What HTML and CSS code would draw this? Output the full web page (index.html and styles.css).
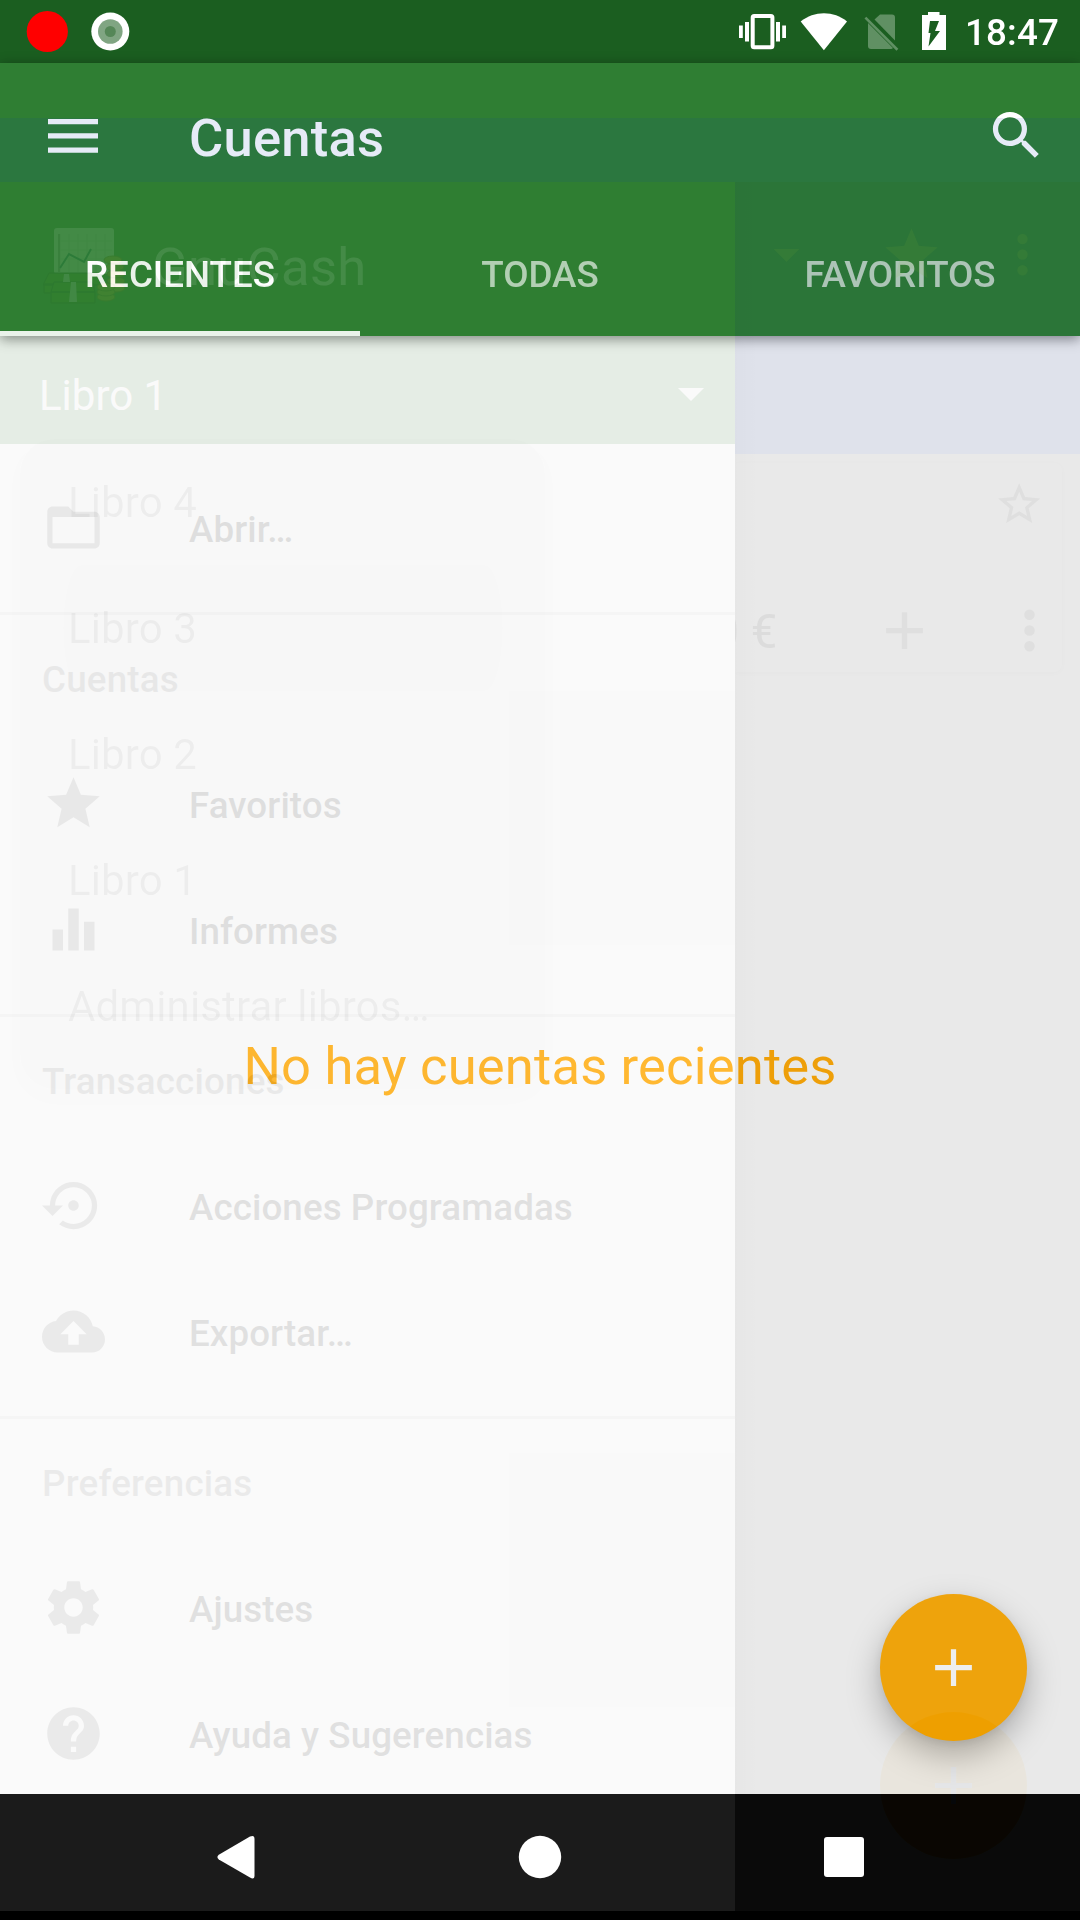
FILE: index.html
```html
<!DOCTYPE html>
<html lang="es">
<head>
<meta charset="utf-8">
<title>GnuCash - Cuentas</title>
<link rel="stylesheet" href="styles.css">
</head>
<body>
<div class="screen">

  <div class="app">
    <header class="status">
      <svg class="status-left" width="140" height="63" viewBox="0 0 140 63">
        <circle cx="47.3" cy="31.5" r="20.6" fill="#f00"/>
        <circle cx="110.3" cy="31.5" r="19" fill="#fff"/>
        <circle cx="110.3" cy="31.5" r="12.3" fill="#80a582"/>
        <circle cx="110.3" cy="31.5" r="5.5" fill="#558757"/>
      </svg>
      <svg class="status-icons" width="220" height="63" viewBox="735 0 220 63">
        <g fill="#fff">
          <rect x="739" y="25.5" width="3.8" height="12.5"/>
          <rect x="745" y="22" width="4" height="19.500"/>
          <rect x="776" y="22" width="4" height="19.500"/>
          <rect x="782.200" y="25.500" width="3.800" height="12.500"/>
          <path d="M800.7 21.500C814 10.500 834 10.500 847 21.500L823.900 50.300Z"/>
          <path d="M928 12h11.500v3H946v35h-24V15h6Z"/>
        </g>
        <rect x="752.700" y="16" width="19.700" height="31.300" rx="1.500" fill="none" stroke="#fff" stroke-width="4"/>
        <path d="M930 21h9l-4 10h5l-11.500 15.500 2-13.500h-2Z" fill="#1b5e20"/>
        <g fill="#609063">
          <path d="M880 14.500h12a3 3 0 0 1 3 3v23L874.500 19.500Z"/>
          <path d="M868 23l25 25a3 3 0 0 1-2 1h-20a3 3 0 0 1-3-3Z"/>
          <path d="M864.500 18.500l1.800-1.800 32 32-1.800 2Z"/>
        </g>
      </svg>
      <span class="clock">18:47</span>
    </header>

    <div class="bar">
      <div class="toolbar">
        <svg class="menu-icon" width="50" height="34" viewBox="0 0 50 34" fill="#fff"><path d="M0 0h50v5.300H0zM0 14.200h50v5.300H0zM0 28.400h50v5.300H0z"/></svg>
        <h1 class="title">Cuentas</h1>
        <svg class="icon" viewBox="0 0 24 24" fill="#fff"><path d="M15.500 14h-.79l-.28-.27A6.471 6.471 0 0 0 16 9.500 6.500 6.500 0 1 0 9.500 16c1.610 0 3.090-.59 4.230-1.570l.27.28v.79l5 4.990L20.490 19l-4.990-5zm-6 0C7.010 14 5 11.990 5 9.500S7.010 5 9.500 5 14 7.010 14 9.500 11.990 14 9.500 14z"/></svg>
      </div>
      <nav class="tabs">
        <span class="tab active">RECIENTES</span>
        <span class="tab">TODAS</span>
        <span class="tab">FAVORITOS</span>
      </nav>
    </div>

    <main class="content">
      <p class="empty">No hay cuentas recientes</p>
    </main>

    <footer class="nav">
      <svg width="1080" height="117" viewBox="0 1794 1080 117" fill="#fff">
        <path d="M250 1836.600Q254.500 1834.500 254.500 1839v36.500Q254.500 1880 250 1877.500L218.800 1859.500Q216 1857 218.800 1854.700Z"/>
        <circle cx="540" cy="1857" r="21.200"/>
        <rect x="824" y="1837" width="40" height="40" rx="3"/>
      </svg>
    </footer>
  </div>

  <div class="fab">
    <svg class="icon" viewBox="0 0 24 24" fill="#fff"><path d="M19 13h-6v6h-2v-6H5v-2h6V5h2v6h6z"/></svg>
  </div>

  <div class="scrim"></div>

  <div class="layer band"></div>

  <div class="layer behind">
    <div class="behind-bar">
      <svg width="345" height="154" viewBox="735 182 345 154" fill="#7db037" fill-opacity=".11">
        <path d="M773.500 249h26L786.500 262Z"/>
        <path transform="translate(880 223) scale(2.625)" d="M12 17.270 18.180 21l-1.640-7.030L22 9.240l-7.190-.61L12 2 9.190 8.630 2 9.240l5.460 4.730L5.820 21z"/>
        <circle cx="1022.500" cy="239" r="5.250"/><circle cx="1022.500" cy="254.500" r="5.250"/><circle cx="1022.500" cy="270.200" r="5.250"/>
      </svg>
    </div>
    <div class="behind-strip"></div>
    <div class="card">
      <svg class="card-star" viewBox="0 0 24 24"><path d="M22 9.240l-7.190-.62L12 2 9.190 8.630 2 9.240l5.460 4.730L5.820 21 12 17.270 18.180 21l-1.630-7.030L22 9.240zM12 15.400l-3.760 2.270 1-4.280-3.320-2.880 4.380-.38L12 6.100l1.710 4.040 4.380.38-3.320 2.880 1 4.280L12 15.400z"/></svg>
      <div class="card-row">
        <span class="amount">0 €</span>
        <svg class="icon" viewBox="0 0 24 24"><path d="M19 13h-6v6h-2v-6H5v-2h6V5h2v6h6z"/></svg>
        <svg class="icon" viewBox="0 0 24 24"><path d="M12 8a2 2 0 1 0 0-4 2 2 0 0 0 0 4zm0 2a2 2 0 1 0 0 4 2 2 0 0 0 0-4zm0 6a2 2 0 1 0 0 4 2 2 0 0 0 0-4z"/></svg>
      </div>
    </div>
  </div>

  <svg class="fab-low" width="147" height="147" viewBox="0 0 147 147">
    <circle cx="73.500" cy="73.500" r="73.500" fill="#00040c"/>
    <path d="M55.100 70.900h15.800V55.100h5.200v15.800h15.800v5.200H76.100v15.800h-5.200V76.100H55.100z" fill="#040301"/>
  </svg>

  <div class="layer drawer">
    <div class="drawer-head">
      <div class="brand">
        <svg width="82" height="76" viewBox="43 228 82 76">
          <rect x="54" y="228" width="60" height="46" rx="3" fill="#f5f5f5"/>
          <path d="M60 234v38M69 234v38M78 234v38M87 234v38M96 234v38M105 234v38M58 241h54M58 250h54M58 259h54" stroke="#cfd8cf" stroke-width="1.200"/>
          <path d="M59 234v38" stroke="#777" stroke-width="1.500"/>
          <path d="M60 268l9-14 15 8 7-13" fill="none" stroke="#186070" stroke-width="2"/>
          <g fill="#458515" stroke="#184a18" stroke-width="1">
            <path d="M49 273h48l4 12H43zM44 284h50v9H44z"/>
            <path d="M54 282h38l3 10H51zM51 292h44v11H51z"/>
          </g>
          <path d="M64 274h5l1 8h-7zM71 282h5l1 20h-8z" fill="#ddd"/>
          <g fill="#d8a52a" stroke="#806810" stroke-width="1">
            <ellipse cx="116" cy="288" rx="9" ry="4"/><ellipse cx="116" cy="281" rx="9" ry="4"/><ellipse cx="116" cy="274" rx="9" ry="4"/><ellipse cx="115" cy="267" rx="9" ry="4"/><ellipse cx="113" cy="260" rx="9" ry="4"/>
            <ellipse cx="106" cy="297" rx="9" ry="4"/><ellipse cx="106" cy="292" rx="9" ry="4"/><ellipse cx="106" cy="287" rx="9" ry="4"/>
          </g>
        </svg>
        <span class="brand-name">GnuCash</span>
      </div>
      <div class="book">
        <span>Libro 1</span>
        <svg width="26" height="13" viewBox="0 0 26 13"><path d="M0 0h26L13 13z" fill="#fff"/></svg>
      </div>
    </div>
    <ul class="group">
      <li><svg class="icon" viewBox="0 0 24 24"><path d="M20 6h-8l-2-2H4c-1.100 0-1.990.9-1.990 2L2 18c0 1.100.9 2 2 2h16c1.100 0 2-.9 2-2V8c0-1.100-.9-2-2-2zm0 12H4V8h16v10z"/></svg><span>Abrir…</span></li>
    </ul>
    <ul class="group">
      <li class="heading">Cuentas</li>
      <li><svg class="icon" viewBox="0 0 24 24"><path d="M12 17.270 18.180 21l-1.640-7.030L22 9.240l-7.190-.61L12 2 9.190 8.630 2 9.240l5.460 4.730L5.820 21z"/></svg><span>Favoritos</span></li>
      <li><svg class="icon" viewBox="0 0 24 24"><path d="M4 12h4v8H4zM10 4h4v16h-4zM16 9h4v11h-4z"/></svg><span>Informes</span></li>
    </ul>
    <ul class="group">
      <li class="heading">Transacciones</li>
      <li><svg class="icon" viewBox="0 0 24 24"><path d="M14 12c0-1.100-.9-2-2-2s-2 .9-2 2 .9 2 2 2 2-.9 2-2zm-2-9c-4.970 0-9 4.030-9 9H0l4 4 4-4H5c0-3.870 3.130-7 7-7s7 3.130 7 7-3.130 7-7 7c-1.510 0-2.910-.49-4.060-1.300l-1.420 1.440C8.040 20.300 9.940 21 12 21c4.970 0 9-4.030 9-9s-4.030-9-9-9z"/></svg><span>Acciones Programadas</span></li>
      <li><svg class="icon" viewBox="0 0 24 24"><path d="M19.350 10.040C18.670 6.590 15.640 4 12 4 9.110 4 6.600 5.640 5.350 8.040 2.340 8.360 0 10.910 0 14c0 3.310 2.690 6 6 6h13c2.760 0 5-2.240 5-5 0-2.640-2.050-4.780-4.650-4.960zM14 13v4h-4v-4H7l5-5 5 5h-3z"/></svg><span>Exportar…</span></li>
    </ul>
    <ul class="group">
      <li class="heading">Preferencias</li>
      <li><svg class="icon" viewBox="0 0 24 24"><path d="M19.430 12.980c.04-.32.070-.64.070-.98s-.03-.66-.07-.98l2.110-1.650c.19-.15.24-.42.12-.64l-2-3.460c-.12-.22-.39-.3-.61-.22l-2.490 1c-.52-.4-1.080-.73-1.690-.98l-.38-2.650C14.460 2.180 14.250 2 14 2h-4c-.25 0-.46.18-.49.42l-.38 2.650c-.61.25-1.170.59-1.690.98l-2.490-1c-.23-.09-.49 0-.61.22l-2 3.460c-.13.22-.07.49.12.64l2.110 1.650c-.04.32-.07.65-.07.98s.03.66.070.98l-2.110 1.650c-.19.15-.24.42-.12.64l2 3.460c.12.22.39.3.61.22l2.490-1c.52.4 1.080.73 1.690.98l.38 2.650c.03.24.24.42.49.42h4c.25 0 .46-.18.49-.42l.38-2.650c.61-.25 1.170-.59 1.690-.98l2.490 1c.23.09.49 0 .61-.22l2-3.460c.12-.22.07-.49-.12-.64l-2.110-1.650zM12 15.500c-1.930 0-3.500-1.570-3.500-3.500s1.570-3.500 3.500-3.500 3.500 1.570 3.500 3.500-1.570 3.500-3.500 3.500z"/></svg><span>Ajustes</span></li>
      <li><svg class="icon" viewBox="0 0 24 24"><path d="M12 2C6.480 2 2 6.480 2 12s4.480 10 10 10 10-4.480 10-10S17.520 2 12 2zm1 17h-2v-2h2v2zm2.070-7.750-.9.920C13.450 12.900 13 13.500 13 15h-2v-.5c0-1.100.45-2.100 1.170-2.830l1.240-1.260c.37-.36.59-.86.59-1.410 0-1.100-.9-2-2-2s-2 .9-2 2H8c0-2.210 1.790-4 4-4s4 1.790 4 4c0 .88-.36 1.680-.93 2.250z"/></svg><span>Ayuda y Sugerencias</span></li>
    </ul>
  </div>

  <ul class="layer popup">
    <li>Libro 4</li>
    <li class="pressed">Libro 3</li>
    <li>Libro 2</li>
    <li>Libro 1</li>
    <li>Administrar libros…</li>
  </ul>
</div>
</body>
</html>
```
FILE: styles.css
```css
* { box-sizing: border-box; margin: 0; padding: 0; }
body { width: 1080px; height: 1920px; overflow: hidden; background: #000; font-family: Roboto, "Liberation Sans", sans-serif; }
ul { list-style: none; }
svg { display: block; flex: none; }
.icon { width: 63px; height: 63px; }

/* Every layer shares the same cell; the app screen is the lowest one. */
.screen { position: relative; display: grid; grid-template: 1920px / 1080px; isolation: isolate; overflow: hidden; }
.app, .layer { grid-area: 1 / 1; }
.layer { z-index: 3; align-self: start; justify-self: start; }

.app { display: flex; flex-direction: column; }
.status { height: 63px; display: flex; align-items: center; background: #1b5e20; color: #fff; }
.status-icons { margin-left: auto; }
.clock { width: 125px; padding: 2px 0 0 10px; font-size: 36.75px; font-weight: 500; line-height: 63px; letter-spacing: .15px; }

.bar { z-index: 1; background: #2f7e33; box-shadow: 0 3px 12px rgba(0, 0, 0, .45); }
.toolbar { height: 147px; display: flex; align-items: center; padding: 0 32px 0 48px; color: #fff; }
.menu-icon { margin: -1px 91px 0 0; }
.title { flex: 1; padding-top: 3px; font-size: 52.5px; font-weight: 500; line-height: 60px; letter-spacing: .25px; }
.toolbar .icon { margin-top: -2px; }
.tabs { height: 126px; display: flex; }
.tab { flex: 1; padding-top: 2px; text-align: center; font-size: 36.75px; font-weight: 500; line-height: 126px; height: 126px; color: rgba(255, 255, 255, .7); }
.tab.active { color: #fff; border-bottom: 5px solid #fff; }

.content { flex: 1; display: flex; align-items: center; justify-content: center; background: #fafafa; }
.empty { padding-top: 2px; font-size: 52.5px; line-height: 62px; letter-spacing: .18px; color: #ffb01a; }
.nav { height: 126px; border-bottom: 9px solid #000; background: linear-gradient(90deg, #1b1b1b 735px, #0a0a0a 735px); }

.fab { position: absolute; left: 880px; top: 1594px; width: 147px; height: 147px; border-radius: 50%; display: grid; place-items: center; background: #ffb41d; box-shadow: 0 14px 34px rgba(0, 0, 0, .25), 0 3px 10px rgba(0, 0, 0, .06); z-index: 1; }
.scrim { position: absolute; left: 735px; top: 336px; width: 345px; height: 1458px; background: #111; mix-blend-mode: difference; z-index: 2; }
.fab-low { position: absolute; left: 880px; top: 1712px; mix-blend-mode: difference; z-index: 3; }

.band { width: 1080px; height: 64px; margin-top: 117.5px; background: rgba(12, 60, 180, .1); }

/* Screen behind the drawer, visible to its right */
.behind { width: 345px; margin: 181.5px 0 0 735px; background: linear-gradient(90deg, rgba(0, 0, 0, .01), transparent 25px); height: 1612px; }
.behind-bar { height: 154.5px; background: rgba(21, 47, 90, .118); }
.behind-strip { height: 118px; background: rgba(133, 163, 253, .1); }
.card { height: 209px; margin: 9px 18px 0 0; border-radius: 0 8px 8px 0; box-shadow: 0 1px 6px rgba(0, 0, 0, .02); fill: #dfdfdf; color: #dcdcdc; clip-path: inset(-12px -18px -12px 0); }
.card-star { width: 50.4px; height: 50.4px; margin: 0 0 0 259px; transform: translateY(16px); }
.card-row { display: flex; align-items: center; height: 63px; margin-top: 86px; }
.amount { flex: none; width: 160px; margin-left: -22.5px; padding-top: 3px; font-size: 47.25px; line-height: 63px; white-space: nowrap; }
.card-row .icon + .icon { margin-left: 62.5px; }

/* Navigation drawer fading out */
.drawer { width: 735px; height: 1612px; margin-top: 181.5px; opacity: .1; background: #fafafa; color: #000; }
.drawer-head { height: 262.5px; background: #357d32; color: #fff; }
.brand { height: 165px; display: flex; gap: 27px; padding: 46px 0 0 43px; }
.brand-name { font-size: 52.5px; line-height: 62px; padding-top: 8px; letter-spacing: .3px; }
.book { display: flex; justify-content: space-between; align-items: center; padding: 0 31.5px 0 39px; height: 97px; font-size: 42px; line-height: 97px; }
.book svg { margin-top: -1px; }
.group { padding: 0 0 21px; border-bottom: 3px solid #c8c8c8; }
.group:nth-of-type(1) { padding-top: 21px; }
.group:last-child { border: 0; padding: 0; }
.group li { display: flex; align-items: center; gap: 84px; height: 126px; padding-left: 42px; font-size: 36.75px; font-weight: 500; letter-spacing: .08px; }
.group li span { padding-top: 3px; }
.group svg { fill: #666; margin-top: -2px; }
.group .heading { color: #666; padding-top: 3px; letter-spacing: .2px; }

.popup { width: 525px; height: 650px; margin: 439px 0 0 20px; border-radius: 34px; background: rgba(0, 0, 0, .006); box-shadow: 0 8px 24px 8px rgba(0, 0, 0, .009); font-size: 42px; line-height: 126px; letter-spacing: .12px; color: rgba(0, 0, 0, .048); }
.popup li { height: 126px; margin: 0 42px 0 43px; padding: 1px 0 0 5px; }
.popup .pressed { border-radius: 18px / 63px; background: rgba(0, 0, 0, .007); }
```
